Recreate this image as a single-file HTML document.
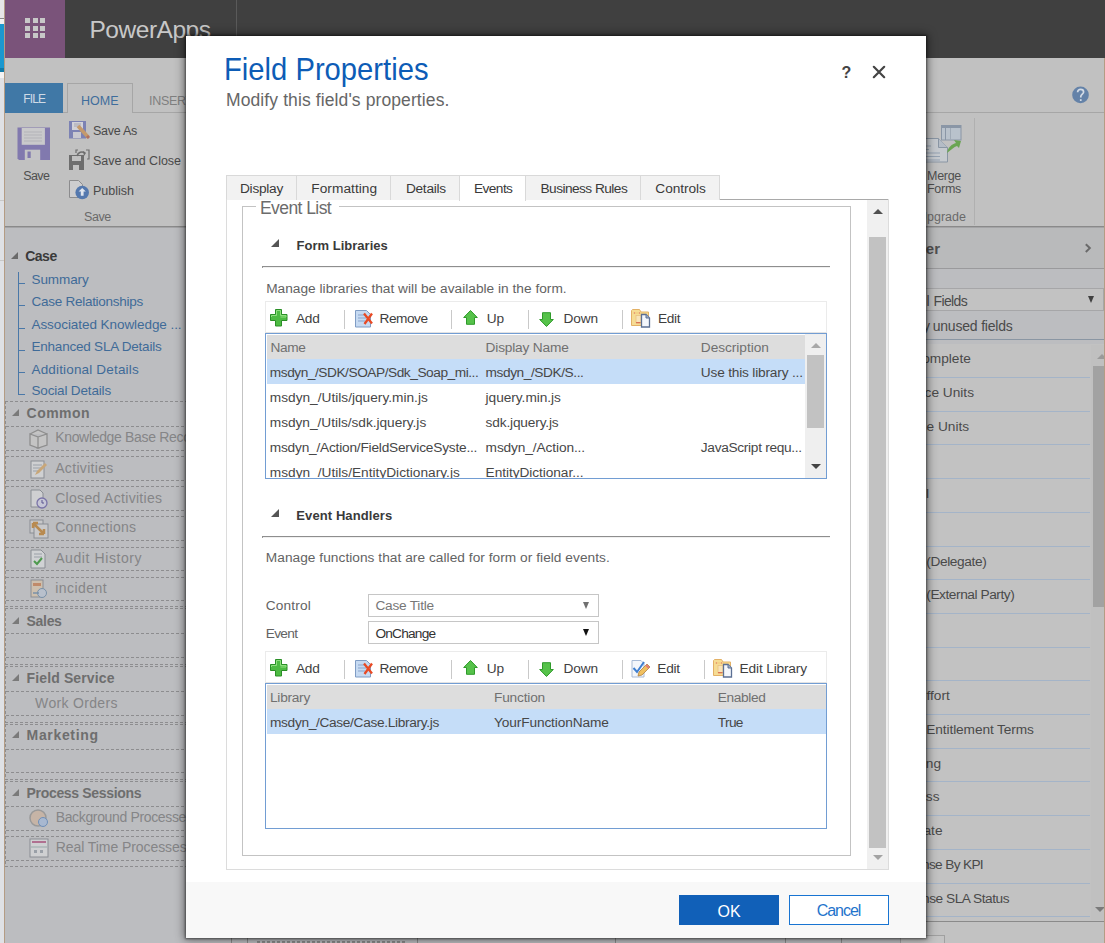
<!DOCTYPE html><html><head><meta charset="utf-8"><style>
html,body{margin:0;padding:0;width:1105px;height:943px;overflow:hidden;position:relative;font-family:"Liberation Sans",sans-serif}
.t{position:absolute;white-space:nowrap;font-family:"Liberation Sans",sans-serif}
</style></head><body>
<div style="position:absolute;left:0px;top:0px;width:1105px;height:943px;background:#bfbfbf"></div>
<div style="position:absolute;left:0px;top:0px;width:5px;height:943px;background:#dfe1e5"></div>
<div style="position:absolute;left:0px;top:0px;width:5px;height:18px;background:#e6e6e6"></div>
<div style="position:absolute;left:0px;top:18px;width:4px;height:1px;background:#8a8a8a"></div>
<div style="position:absolute;left:0px;top:19px;width:4px;height:5px;background:#f2f2f2"></div>
<div style="position:absolute;left:0px;top:24px;width:4px;height:44px;background:#1b98cf"></div>
<div style="position:absolute;left:0px;top:68px;width:4px;height:4px;background:#107aa8"></div>
<div style="position:absolute;left:0px;top:72px;width:4px;height:6px;background:#f4f4f4"></div>
<div style="position:absolute;left:0px;top:200px;width:4px;height:1px;background:#c8c8c8"></div>
<div style="position:absolute;left:0px;top:260px;width:4px;height:1px;background:#c8c8c8"></div>
<div style="position:absolute;left:4px;top:0px;width:1px;height:943px;background:#b49c84"></div>
<div style="position:absolute;left:5px;top:0px;width:1100px;height:58px;background:#404040"></div>
<div style="position:absolute;left:5px;top:0px;width:60px;height:58px;background:#7a537a"></div>
<div style="position:absolute;left:25px;top:18px;width:5px;height:5px;background:#c8c8c8"></div>
<div style="position:absolute;left:32.5px;top:18px;width:5px;height:5px;background:#c8c8c8"></div>
<div style="position:absolute;left:40px;top:18px;width:5px;height:5px;background:#c8c8c8"></div>
<div style="position:absolute;left:25px;top:25.5px;width:5px;height:5px;background:#c8c8c8"></div>
<div style="position:absolute;left:32.5px;top:25.5px;width:5px;height:5px;background:#c8c8c8"></div>
<div style="position:absolute;left:40px;top:25.5px;width:5px;height:5px;background:#c8c8c8"></div>
<div style="position:absolute;left:25px;top:33px;width:5px;height:5px;background:#c8c8c8"></div>
<div style="position:absolute;left:32.5px;top:33px;width:5px;height:5px;background:#c8c8c8"></div>
<div style="position:absolute;left:40px;top:33px;width:5px;height:5px;background:#c8c8c8"></div>
<div class="t" style="left:89.50px;top:13.60px;font-size:24.5px;line-height:31px;color:#c8c8c8;letter-spacing:-0.477px;">PowerApps</div>
<div style="position:absolute;left:236px;top:0px;width:1px;height:58px;background:#5a5a5a"></div>
<div style="position:absolute;left:5px;top:58px;width:1100px;height:169px;background:#c1c1c1"></div>
<div style="position:absolute;left:5px;top:112px;width:1100px;height:1px;background:#a6a6a6"></div>
<div style="position:absolute;left:5px;top:83px;width:58px;height:30px;background:#4078a6"></div>
<div class="t" style="left:23.20px;top:92.00px;font-size:12px;line-height:15px;color:#cfdbe6;letter-spacing:-0.836px;">FILE</div>
<div style="position:absolute;left:67px;top:83px;width:66px;height:30px;background:#c1c1c1;border:1px solid #a6a6a6;border-bottom:none;box-sizing:border-box"></div>
<div class="t" style="left:81.00px;top:92.80px;font-size:12.5px;line-height:16px;color:#3f6d9c;letter-spacing:0.000px;">HOME</div>
<div class="t" style="left:149.00px;top:92.80px;font-size:12.5px;line-height:16px;color:#7f7f7f;letter-spacing:-0.271px;">INSERT</div>
<svg style="position:absolute;left:17px;top:127px" width="34" height="34" viewBox="0 0 34 34">
<path d="M0.5 0.5h32.5v32.5H2l-1.5-1.5z" fill="#8179ae"/>
<rect x="4.7" y="1" width="23.2" height="16.8" fill="#c9c9cb"/>
<path d="M7 5h18M7 8h18M7 11h18M7 14h18" stroke="#aeaeb4" stroke-width="0.8"/>
<rect x="7.8" y="22.7" width="15.4" height="10.3" fill="#c4c4c6"/>
<rect x="10.5" y="24.5" width="3.2" height="6.5" fill="#8179ae"/>
</svg>
<div class="t" style="left:23.20px;top:167.70px;font-size:12.5px;line-height:16px;color:#4f4f4f;letter-spacing:-0.575px;">Save</div>
<svg style="position:absolute;left:69px;top:121px" width="21" height="19" viewBox="0 0 21 19">
<rect x="0" y="0" width="17" height="17.5" fill="#7c82b4"/><rect x="3" y="1" width="11" height="8" fill="#d2d2d8"/>
<path d="M5 3h7M5 5h7" stroke="#9a9aa8" stroke-width="0.8"/><rect x="4" y="11" width="8" height="6" fill="#c8c8d0"/>
<path d="M9 5l10.5 11.5" stroke="#c49a6c" stroke-width="3.6"/><path d="M18 15l2 2" stroke="#b07060" stroke-width="3"/></svg>
<div class="t" style="left:93.00px;top:123.00px;font-size:12.5px;line-height:16px;color:#4a4a4a;letter-spacing:-0.268px;">Save As</div>
<svg style="position:absolute;left:69px;top:149px" width="21" height="21" viewBox="0 0 21 21">
<path d="M0 6h15v15H0z" fill="#6e6e6e"/><rect x="3" y="7" width="9" height="5" fill="#c1c1c1"/><rect x="4" y="16" width="6" height="5" fill="#c1c1c1"/>
<path d="M7 4V1h2M17 1h3v9h-2" fill="none" stroke="#6e6e6e" stroke-width="1.2"/><path d="M8 7c1-4 5-5 8-3" fill="none" stroke="#6e6e6e" stroke-width="1.6"/><path d="M14 2l3 2-2 3" fill="#6e6e6e"/></svg>
<div class="t" style="left:93.00px;top:153.00px;font-size:12.5px;line-height:16px;color:#4a4a4a;letter-spacing:-0.019px;">Save and Close</div>
<svg style="position:absolute;left:69px;top:180px" width="21" height="21" viewBox="0 0 21 21">
<path d="M0.5 0.5h9l4 4v13H0.5z" fill="#cdcdcf" stroke="#8c8c8e" stroke-width="1"/>
<circle cx="13.2" cy="12.5" r="6.8" fill="#5478ae"/><path d="M13.2 8l-3.6 3.6h2.2v4.2h2.8v-4.2h2.2z" fill="#dfe5ee"/></svg>
<div class="t" style="left:93.00px;top:182.80px;font-size:12.5px;line-height:16px;color:#4a4a4a;letter-spacing:0.000px;">Publish</div>
<div class="t" style="left:84.00px;top:209.00px;font-size:12.5px;line-height:16px;color:#6a6a6a;letter-spacing:-0.450px;">Save</div>
<div style="position:absolute;left:5px;top:226px;width:1100px;height:1px;background:#9a9a9a"></div>
<div style="position:absolute;left:5px;top:227px;width:1100px;height:1px;background:#b0b0b0"></div>
<svg style="position:absolute;left:1072px;top:86px" width="17" height="18" viewBox="0 0 17 18">
<circle cx="8.5" cy="8.9" r="8.3" fill="#6482a8"/><path d="M5.6 6.3c0-2 1.3-3 3-3s3 1 3 2.6c0 2-2.8 2.3-2.8 4.6v1" fill="none" stroke="#d4dce6" stroke-width="1.7"/><rect x="7.9" y="13.2" width="1.7" height="1.8" fill="#d4dce6"/></svg>
<svg style="position:absolute;left:920px;top:124px" width="44" height="42" viewBox="0 0 44 42">
<rect x="21.5" y="1.5" width="19.5" height="14.5" fill="#b9c2cc" stroke="#8a96a6" stroke-width="1"/><rect x="21.5" y="1.5" width="19.5" height="2.5" fill="#8a96a6"/><path d="M25.5 4v12" stroke="#8a96a6"/><path d="M30.5 4v12" stroke="#a0aab6"/>
<path d="M0 14.5h18.5l9 9v14.5H0z" fill="#c6cacf" stroke="#8a96a4" stroke-width="1"/>
<path d="M18.5 14.5v9h9" fill="#b4bcc6" stroke="#8a96a4" stroke-width="1"/>
<path d="M4 22h7M4 25.5h5M4 29h16M4 32.5h16M4 36h16" stroke="#95a2b2" stroke-width="1"/>
<path d="M27 29c1-6 5-9 9-10l-2-3 7 1-2 7-2-2c-3 1-6 4-10 7z" fill="#6aa552"/></svg>
<div class="t" style="left:927.00px;top:168.00px;font-size:12.5px;line-height:16px;color:#4f4f4f;letter-spacing:-0.287px;">Merge</div>
<div class="t" style="left:927.00px;top:181.00px;font-size:12.5px;line-height:16px;color:#4f4f4f;letter-spacing:-0.284px;">Forms</div>
<div class="t" style="left:918.00px;top:209.00px;font-size:12.5px;line-height:16px;color:#6a6a6a;letter-spacing:0.007px;">Upgrade</div>
<div style="position:absolute;left:974px;top:118px;width:1px;height:107px;background:#b0b0b0"></div>
<div style="position:absolute;left:5px;top:228px;width:1099px;height:715px;background:#bcbdc0"></div>
<div style="position:absolute;left:5px;top:226px;width:1100px;height:1px;background:#8a8a8a"></div>
<div style="position:absolute;left:5px;top:227px;width:1100px;height:1px;background:#a4a4a6"></div>
<div style="position:absolute;left:4px;top:58px;width:1px;height:885px;background:#b49c84"></div>
<div style="position:absolute;left:1104px;top:58px;width:1px;height:885px;background:#b49c84"></div>
<div style="position:absolute;left:11px;top:252px;width:0;height:0;border-left:7px solid transparent;border-bottom:7px solid #6a6a6a"></div>
<div class="t" style="left:25.20px;top:247.00px;font-size:14px;line-height:18px;color:#3a3a3a;font-weight:bold;letter-spacing:-0.492px;">Case</div>
<div style="position:absolute;left:18px;top:272px;width:1px;height:123px;background:#4a78a8"></div>
<div style="position:absolute;left:0;top:0;width:186px;height:395px;overflow:hidden">
<div style="position:absolute;left:18px;top:282.5px;width:7px;height:1px;background:#4a78a8"></div>
<div class="t" style="left:31.50px;top:271.00px;font-size:13.5px;line-height:17px;color:#3f6b98;letter-spacing:-0.081px;">Summary</div>
<div style="position:absolute;left:18px;top:304.5px;width:7px;height:1px;background:#4a78a8"></div>
<div class="t" style="left:31.50px;top:293.00px;font-size:13.5px;line-height:17px;color:#3f6b98;letter-spacing:-0.267px;">Case Relationships</div>
<div style="position:absolute;left:18px;top:327.5px;width:7px;height:1px;background:#4a78a8"></div>
<div class="t" style="left:31.50px;top:316.00px;font-size:13.5px;line-height:17px;color:#3f6b98;letter-spacing:-0.066px;">Associated Knowledge ...</div>
<div style="position:absolute;left:18px;top:349.5px;width:7px;height:1px;background:#4a78a8"></div>
<div class="t" style="left:31.50px;top:338.00px;font-size:13.5px;line-height:17px;color:#3f6b98;letter-spacing:-0.217px;">Enhanced SLA Details</div>
<div style="position:absolute;left:18px;top:372.0px;width:7px;height:1px;background:#4a78a8"></div>
<div class="t" style="left:31.50px;top:360.50px;font-size:13.5px;line-height:17px;color:#3f6b98;letter-spacing:0.166px;">Additional Details</div>
<div style="position:absolute;left:18px;top:393.5px;width:7px;height:1px;background:#4a78a8"></div>
<div class="t" style="left:31.50px;top:382.00px;font-size:13.5px;line-height:17px;color:#3f6b98;letter-spacing:-0.164px;">Social Details</div>
</div>
<div style="position:absolute;left:5px;top:401px;width:181px;height:1px;background:repeating-linear-gradient(90deg,#8d8d8f 0 3px,transparent 3px 5px)"></div>
<div style="position:absolute;left:5px;top:605.5px;width:181px;height:1px;background:repeating-linear-gradient(90deg,#8d8d8f 0 3px,transparent 3px 5px)"></div>
<div style="position:absolute;left:5px;top:401px;width:1px;height:205.5px;background:repeating-linear-gradient(180deg,#8d8d8f 0 3px,transparent 3px 5px)"></div>
<div style="position:absolute;left:12px;top:408.5px;width:0;height:0;border-left:7px solid transparent;border-bottom:7px solid #7a7a7a"></div>
<div class="t" style="left:26.60px;top:403.50px;font-size:14px;line-height:18px;color:#6e6e6e;font-weight:bold;letter-spacing:0.471px;">Common</div>
<div style="position:absolute;left:0;top:0;width:186px;height:943px;overflow:hidden">
<div style="position:absolute;left:6px;top:426px;width:180px;height:1px;background:repeating-linear-gradient(90deg,#8d8d8f 0 3px,transparent 3px 5px)"></div>
<div style="position:absolute;left:6px;top:449.5px;width:180px;height:1px;background:repeating-linear-gradient(90deg,#8d8d8f 0 3px,transparent 3px 5px)"></div>
<svg style="position:absolute;left:29px;top:428.5px" width="20" height="20" viewBox="0 0 20 20"><path d="M1 5l8 3v11l-8-3zM9 8l9-3v11l-9 3zM1 5l8-4 9 4" fill="#c4c4c4" stroke="#8e8e8e" stroke-width="1.3"/></svg>
<div class="t" style="left:55.20px;top:428.20px;font-size:14px;line-height:18px;color:#858587;letter-spacing:-0.328px;">Knowledge Base Records</div>
<div style="position:absolute;left:6px;top:456px;width:180px;height:1px;background:repeating-linear-gradient(90deg,#8d8d8f 0 3px,transparent 3px 5px)"></div>
<div style="position:absolute;left:6px;top:479.5px;width:180px;height:1px;background:repeating-linear-gradient(90deg,#8d8d8f 0 3px,transparent 3px 5px)"></div>
<svg style="position:absolute;left:29px;top:458.5px" width="20" height="20" viewBox="0 0 20 20"><rect x="2" y="2" width="13" height="17" fill="#cfd0d2" stroke="#8a8e94"/><path d="M4 6h9M4 9h9M4 12h7" stroke="#9aa0a8"/><path d="M6 16l2-4 8-8 2 2-8 8z" fill="#c8a678"/></svg>
<div class="t" style="left:55.20px;top:458.80px;font-size:14px;line-height:18px;color:#858587;letter-spacing:0.327px;">Activities</div>
<div style="position:absolute;left:6px;top:486px;width:180px;height:1px;background:repeating-linear-gradient(90deg,#8d8d8f 0 3px,transparent 3px 5px)"></div>
<div style="position:absolute;left:6px;top:509.5px;width:180px;height:1px;background:repeating-linear-gradient(90deg,#8d8d8f 0 3px,transparent 3px 5px)"></div>
<svg style="position:absolute;left:29px;top:488.5px" width="20" height="20" viewBox="0 0 20 20"><path d="M2 1h9l3 3v14H2z" fill="#cfd0d2" stroke="#8a8e94"/><circle cx="13" cy="14" r="5" fill="#c6c6d6" stroke="#7a74a8" stroke-width="1.3"/><path d="M13 11v3h2" stroke="#5a5490" fill="none"/></svg>
<div class="t" style="left:55.20px;top:488.60px;font-size:14px;line-height:18px;color:#858587;letter-spacing:0.310px;">Closed Activities</div>
<div style="position:absolute;left:6px;top:516px;width:180px;height:1px;background:repeating-linear-gradient(90deg,#8d8d8f 0 3px,transparent 3px 5px)"></div>
<div style="position:absolute;left:6px;top:539.5px;width:180px;height:1px;background:repeating-linear-gradient(90deg,#8d8d8f 0 3px,transparent 3px 5px)"></div>
<svg style="position:absolute;left:29px;top:518.5px" width="20" height="20" viewBox="0 0 20 20"><rect x="1" y="1" width="13" height="13" fill="#c8c8ca" stroke="#8a8e94"/><rect x="5" y="5" width="14" height="14" fill="#c8c8ca" stroke="#8a8e94"/><path d="M4 4l11 11M4 4h5M4 4v5M15 15h-5M15 15v-5" stroke="#b88a50" stroke-width="2.5"/></svg>
<div class="t" style="left:55.20px;top:518.40px;font-size:14px;line-height:18px;color:#858587;letter-spacing:0.307px;">Connections</div>
<div style="position:absolute;left:6px;top:546.5px;width:180px;height:1px;background:repeating-linear-gradient(90deg,#8d8d8f 0 3px,transparent 3px 5px)"></div>
<div style="position:absolute;left:6px;top:570px;width:180px;height:1px;background:repeating-linear-gradient(90deg,#8d8d8f 0 3px,transparent 3px 5px)"></div>
<svg style="position:absolute;left:29px;top:549.0px" width="20" height="20" viewBox="0 0 20 20"><path d="M2 1h10l4 4v14H2z" fill="#d0d2d4" stroke="#8a8e94"/><path d="M5 5h8M5 8h8" stroke="#9aa0a8"/><path d="M5 12l3 3 5-6" stroke="#4e9a4e" stroke-width="2" fill="none"/></svg>
<div class="t" style="left:55.20px;top:548.60px;font-size:14px;line-height:18px;color:#858587;letter-spacing:0.588px;">Audit History</div>
<div style="position:absolute;left:6px;top:576.5px;width:180px;height:1px;background:repeating-linear-gradient(90deg,#8d8d8f 0 3px,transparent 3px 5px)"></div>
<div style="position:absolute;left:6px;top:600px;width:180px;height:1px;background:repeating-linear-gradient(90deg,#8d8d8f 0 3px,transparent 3px 5px)"></div>
<svg style="position:absolute;left:29px;top:579.0px" width="20" height="20" viewBox="0 0 20 20"><rect x="2" y="1" width="12" height="17" fill="#cdbfae" stroke="#8a8e94"/><rect x="4" y="4" width="8" height="3" fill="#c08a6a"/><circle cx="13" cy="14" r="4.5" fill="#b8c0cc" stroke="#7890a8"/><path d="M4 14h6" stroke="#7890a8" stroke-width="1.5"/></svg>
<div class="t" style="left:55.20px;top:578.60px;font-size:14px;line-height:18px;color:#858587;letter-spacing:0.467px;">incident</div>
<div style="position:absolute;left:5px;top:607.5px;width:181px;height:1px;background:repeating-linear-gradient(90deg,#8d8d8f 0 3px,transparent 3px 5px)"></div>
<div style="position:absolute;left:5px;top:664px;width:181px;height:1px;background:repeating-linear-gradient(90deg,#8d8d8f 0 3px,transparent 3px 5px)"></div>
<div style="position:absolute;left:5px;top:607.5px;width:1px;height:57.5px;background:repeating-linear-gradient(180deg,#8d8d8f 0 3px,transparent 3px 5px)"></div>
<div style="position:absolute;left:12px;top:617px;width:0;height:0;border-left:7px solid transparent;border-bottom:7px solid #7a7a7a"></div>
<div class="t" style="left:26.60px;top:612.00px;font-size:14px;line-height:18px;color:#6e6e6e;font-weight:bold;letter-spacing:-0.319px;">Sales</div>
<div style="position:absolute;left:6px;top:633px;width:180px;height:1px;background:repeating-linear-gradient(90deg,#8d8d8f 0 3px,transparent 3px 5px)"></div>
<div style="position:absolute;left:6px;top:656.5px;width:180px;height:1px;background:repeating-linear-gradient(90deg,#8d8d8f 0 3px,transparent 3px 5px)"></div>
<div style="position:absolute;left:5px;top:666px;width:181px;height:1px;background:repeating-linear-gradient(90deg,#8d8d8f 0 3px,transparent 3px 5px)"></div>
<div style="position:absolute;left:5px;top:721.5px;width:181px;height:1px;background:repeating-linear-gradient(90deg,#8d8d8f 0 3px,transparent 3px 5px)"></div>
<div style="position:absolute;left:5px;top:666px;width:1px;height:56.5px;background:repeating-linear-gradient(180deg,#8d8d8f 0 3px,transparent 3px 5px)"></div>
<div style="position:absolute;left:12px;top:673.5px;width:0;height:0;border-left:7px solid transparent;border-bottom:7px solid #7a7a7a"></div>
<div class="t" style="left:26.60px;top:668.50px;font-size:14px;line-height:18px;color:#6e6e6e;font-weight:bold;letter-spacing:0.124px;">Field Service</div>
<div style="position:absolute;left:6px;top:691px;width:180px;height:1px;background:repeating-linear-gradient(90deg,#8d8d8f 0 3px,transparent 3px 5px)"></div>
<div style="position:absolute;left:6px;top:714.5px;width:180px;height:1px;background:repeating-linear-gradient(90deg,#8d8d8f 0 3px,transparent 3px 5px)"></div>
<div class="t" style="left:35.10px;top:694.00px;font-size:14px;line-height:18px;color:#858587;letter-spacing:0.328px;">Work Orders</div>
<div style="position:absolute;left:5px;top:723.5px;width:181px;height:1px;background:repeating-linear-gradient(90deg,#8d8d8f 0 3px,transparent 3px 5px)"></div>
<div style="position:absolute;left:5px;top:778.5px;width:181px;height:1px;background:repeating-linear-gradient(90deg,#8d8d8f 0 3px,transparent 3px 5px)"></div>
<div style="position:absolute;left:5px;top:723.5px;width:1px;height:56.0px;background:repeating-linear-gradient(180deg,#8d8d8f 0 3px,transparent 3px 5px)"></div>
<div style="position:absolute;left:12px;top:731px;width:0;height:0;border-left:7px solid transparent;border-bottom:7px solid #7a7a7a"></div>
<div class="t" style="left:26.60px;top:726.00px;font-size:14px;line-height:18px;color:#6e6e6e;font-weight:bold;letter-spacing:0.653px;">Marketing</div>
<div style="position:absolute;left:6px;top:748.5px;width:180px;height:1px;background:repeating-linear-gradient(90deg,#8d8d8f 0 3px,transparent 3px 5px)"></div>
<div style="position:absolute;left:6px;top:772px;width:180px;height:1px;background:repeating-linear-gradient(90deg,#8d8d8f 0 3px,transparent 3px 5px)"></div>
<div style="position:absolute;left:5px;top:780.5px;width:181px;height:1px;background:repeating-linear-gradient(90deg,#8d8d8f 0 3px,transparent 3px 5px)"></div>
<div style="position:absolute;left:5px;top:866px;width:181px;height:1px;background:repeating-linear-gradient(90deg,#8d8d8f 0 3px,transparent 3px 5px)"></div>
<div style="position:absolute;left:5px;top:780.5px;width:1px;height:86.5px;background:repeating-linear-gradient(180deg,#8d8d8f 0 3px,transparent 3px 5px)"></div>
<div style="position:absolute;left:12px;top:788.6px;width:0;height:0;border-left:7px solid transparent;border-bottom:7px solid #7a7a7a"></div>
<div class="t" style="left:26.60px;top:783.60px;font-size:14px;line-height:18px;color:#6e6e6e;font-weight:bold;letter-spacing:-0.329px;">Process Sessions</div>
<div style="position:absolute;left:6px;top:806px;width:180px;height:1px;background:repeating-linear-gradient(90deg,#8d8d8f 0 3px,transparent 3px 5px)"></div>
<div style="position:absolute;left:6px;top:829.5px;width:180px;height:1px;background:repeating-linear-gradient(90deg,#8d8d8f 0 3px,transparent 3px 5px)"></div>
<svg style="position:absolute;left:29px;top:808px" width="20" height="20" viewBox="0 0 20 20"><circle cx="9" cy="10" r="8" fill="#c6b4a6" stroke="#999" stroke-width="1.5"/><circle cx="14" cy="14" r="4.5" fill="#a8b8d0" stroke="#6f8fb8"/></svg>
<div class="t" style="left:55.70px;top:808.30px;font-size:14px;line-height:18px;color:#858587;letter-spacing:-0.348px;">Background Processes</div>
<div style="position:absolute;left:6px;top:836px;width:180px;height:1px;background:repeating-linear-gradient(90deg,#8d8d8f 0 3px,transparent 3px 5px)"></div>
<div style="position:absolute;left:6px;top:859.5px;width:180px;height:1px;background:repeating-linear-gradient(90deg,#8d8d8f 0 3px,transparent 3px 5px)"></div>
<svg style="position:absolute;left:29px;top:838px" width="20" height="20" viewBox="0 0 20 20"><rect x="1" y="1" width="18" height="18" fill="#cfd0d2" stroke="#8a8e94"/><path d="M3 4h14" stroke="#b07090" stroke-width="2"/><path d="M2 9h16" stroke="#9aa"/><rect x="5" y="12" width="3" height="3" fill="#9aa0a8"/><rect x="11" y="12" width="3" height="3" fill="#9aa0a8"/></svg>
<div class="t" style="left:55.70px;top:838.30px;font-size:14px;line-height:18px;color:#858587;letter-spacing:-0.067px;">Real Time Processes</div>
</div>
<div style="position:absolute;left:900px;top:228px;width:204px;height:40px;background:#b9babb"></div>
<div class="t" style="left:839.97px;top:239.00px;font-size:15px;line-height:19px;color:#505050;font-weight:bold;">Field Explorer</div>
<svg style="position:absolute;left:1083px;top:242px" width="10" height="12"><path d="M2.8 2.2l4 3.9-4 3.9" fill="none" stroke="#6a6a6a" stroke-width="2"/></svg>
<div style="position:absolute;left:926px;top:268px;width:178px;height:1px;background:#9a9a9c"></div>
<div style="position:absolute;left:900px;top:288px;width:204px;height:22.5px;background:#c2c2c2;border:1px solid #a6a6a8;box-sizing:border-box"></div>
<div class="t" style="left:926.50px;top:292.20px;font-size:14px;line-height:18px;color:#4a4a4a;">l</div>
<div class="t" style="left:933.50px;top:292.20px;font-size:14px;line-height:18px;color:#4a4a4a;letter-spacing:-0.643px;">Fields</div>
<div style="position:absolute;left:1088px;top:296px;width:0;height:0;border-left:3.6px solid transparent;border-right:3.6px solid transparent;border-top:7px solid #404040"></div>
<div class="t" style="left:923.00px;top:316.70px;font-size:14px;line-height:18px;color:#4a4a4a;">y</div>
<div class="t" style="left:932.70px;top:316.70px;font-size:14px;line-height:18px;color:#4a4a4a;letter-spacing:-0.194px;">unused fields</div>
<div style="position:absolute;left:900px;top:339px;width:204px;height:1px;background:#8a96a3"></div>
<div style="position:absolute;left:900px;top:343.5px;width:204px;height:580px;background:#c2c2c2"></div>
<div style="position:absolute;left:926px;top:377.0px;width:164px;height:1px;background:#a4b4c8"></div>
<div style="position:absolute;left:926px;top:410.7px;width:164px;height:1px;background:#a4b4c8"></div>
<div style="position:absolute;left:926px;top:444.4px;width:164px;height:1px;background:#a4b4c8"></div>
<div style="position:absolute;left:926px;top:478.1px;width:164px;height:1px;background:#a4b4c8"></div>
<div style="position:absolute;left:926px;top:511.8px;width:164px;height:1px;background:#a4b4c8"></div>
<div style="position:absolute;left:926px;top:545.5px;width:164px;height:1px;background:#a4b4c8"></div>
<div style="position:absolute;left:926px;top:579.2px;width:164px;height:1px;background:#a4b4c8"></div>
<div style="position:absolute;left:926px;top:612.9000000000001px;width:164px;height:1px;background:#a4b4c8"></div>
<div style="position:absolute;left:926px;top:646.6px;width:164px;height:1px;background:#a4b4c8"></div>
<div style="position:absolute;left:926px;top:680.3px;width:164px;height:1px;background:#a4b4c8"></div>
<div style="position:absolute;left:926px;top:714.0px;width:164px;height:1px;background:#a4b4c8"></div>
<div style="position:absolute;left:926px;top:747.7px;width:164px;height:1px;background:#a4b4c8"></div>
<div style="position:absolute;left:926px;top:781.4000000000001px;width:164px;height:1px;background:#a4b4c8"></div>
<div style="position:absolute;left:926px;top:815.1px;width:164px;height:1px;background:#a4b4c8"></div>
<div style="position:absolute;left:926px;top:848.8000000000001px;width:164px;height:1px;background:#a4b4c8"></div>
<div style="position:absolute;left:926px;top:882.5px;width:164px;height:1px;background:#a4b4c8"></div>
<div style="position:absolute;left:926px;top:916.2px;width:164px;height:1px;background:#a4b4c8"></div>
<div style="position:absolute;left:1091px;top:345px;width:13px;height:575px;background:#c0c0c0"></div>
<div style="position:absolute;left:1093px;top:366px;width:11px;height:241px;background:#a2a2a2"></div>
<div style="position:absolute;left:1097px;top:353.8px;width:0;height:0;border-left:5px solid transparent;border-right:5px solid transparent;border-bottom:5px solid #9a9a9a"></div>
<div style="position:absolute;left:1095px;top:907px;width:0;height:0;border-left:5px solid transparent;border-right:5px solid transparent;border-top:5px solid #7a7a7a"></div>
<div style="position:absolute;left:1104px;top:58px;width:1px;height:885px;background:#b49c84"></div>
<div style="position:absolute;left:900px;top:921px;width:204px;height:1px;background:#8a8a8a"></div>
<div style="position:absolute;left:900px;top:922px;width:204px;height:21px;background:#c2c2c2"></div>
<div style="position:absolute;left:900px;top:935px;width:45px;height:10px;border:1px solid #a0a0a0;box-sizing:border-box;background:#c4c4c4"></div>
<div style="position:absolute;left:231px;top:936px;width:1px;height:7px;background:#8a8a8a"></div>
<div style="position:absolute;left:246.5px;top:936px;width:1px;height:7px;background:#8a8a8a"></div>
<div style="position:absolute;left:416.5px;top:936px;width:1px;height:7px;background:#8a8a8a"></div>
<div style="position:absolute;left:615px;top:936px;width:1px;height:7px;background:#8a8a8a"></div>
<div style="position:absolute;left:785px;top:936px;width:1px;height:7px;background:#8a8a8a"></div>
<div style="position:absolute;left:840.5px;top:936px;width:1px;height:7px;background:#8a8a8a"></div>
<div style="position:absolute;left:257px;top:941px;width:148px;height:2px;background:repeating-linear-gradient(90deg,#8a8a8a 0 3px,transparent 3px 5px)"></div>
<div class="t" style="left:922.20px;top:350.30px;font-size:13.7px;line-height:17px;color:#4a4a4a;">omplete</div>
<div class="t" style="left:924.55px;top:384.00px;font-size:13.7px;line-height:17px;color:#4a4a4a;">ce Units</div>
<div class="t" style="left:926.49px;top:417.70px;font-size:13.7px;line-height:17px;color:#4a4a4a;">e Units</div>
<div class="t" style="left:925.95px;top:485.10px;font-size:13.7px;line-height:17px;color:#4a4a4a;">l</div>
<div class="t" style="left:926.46px;top:687.30px;font-size:13.7px;line-height:17px;color:#4a4a4a;">ffort</div>
<div class="t" style="left:925.77px;top:754.70px;font-size:13.7px;line-height:17px;color:#4a4a4a;">ng</div>
<div class="t" style="left:925.81px;top:788.40px;font-size:13.7px;line-height:17px;color:#4a4a4a;">ss</div>
<div class="t" style="left:923.47px;top:822.10px;font-size:13.7px;line-height:17px;color:#4a4a4a;">ate</div>
<div class="t" style="left:926.30px;top:552.50px;font-size:13.7px;line-height:17px;color:#4a4a4a;letter-spacing:-0.391px;">(Delegate)</div>
<div class="t" style="left:926.30px;top:586.20px;font-size:13.7px;line-height:17px;color:#4a4a4a;letter-spacing:-0.442px;">(External Party)</div>
<div class="t" style="left:926.30px;top:721.00px;font-size:13.7px;line-height:17px;color:#4a4a4a;letter-spacing:-0.106px;">Entitlement Terms</div>
<div class="t" style="left:922.00px;top:855.80px;font-size:13.7px;line-height:17px;color:#4a4a4a;letter-spacing:-0.672px;">nse By KPI</div>
<div class="t" style="left:922.00px;top:889.50px;font-size:13.7px;line-height:17px;color:#4a4a4a;letter-spacing:-0.471px;">nse SLA Status</div>
<div style="position:absolute;left:186px;top:36px;width:740px;height:901.5px;background:#fff;box-shadow:0 0 2px 1px rgba(0,0,0,.45),0 0 9px 2px rgba(0,0,0,.45)"></div>
<div style="position:absolute;left:186px;top:882px;width:740px;height:55.5px;background:#f8f8f8"></div>
<div class="t" style="left:224.00px;top:49.90px;font-size:30.5px;line-height:38px;color:#0d5cb6;transform:scaleX(0.9574);transform-origin:0 0;">Field Properties</div>
<div class="t" style="left:226.00px;top:88.60px;font-size:17.5px;line-height:22px;color:#666666;letter-spacing:0.105px;">Modify this field&#x27;s properties.</div>
<div class="t" style="left:841.50px;top:63.00px;font-size:16px;line-height:20px;color:#444;font-weight:bold;letter-spacing:-0.781px;">?</div>
<svg style="position:absolute;left:872px;top:65px" width="14" height="14" viewBox="0 0 14 14"><path d="M1.8 1.8l10.4 10.4M12.2 1.8L1.8 12.2" stroke="#444" stroke-width="2.2" stroke-linecap="round"/></svg>
<div style="position:absolute;left:226px;top:175px;width:71px;height:24.5px;background:#f2f2f2;border:1px solid #d9d9d9;border-bottom:none;box-sizing:border-box"></div>
<div class="t" style="left:240.00px;top:180.00px;font-size:13.7px;line-height:17px;color:#3a3a3a;letter-spacing:-0.270px;">Display</div>
<div style="position:absolute;left:296px;top:175px;width:95px;height:24.5px;background:#f2f2f2;border:1px solid #d9d9d9;border-bottom:none;box-sizing:border-box"></div>
<div class="t" style="left:311.30px;top:180.00px;font-size:13.7px;line-height:17px;color:#3a3a3a;letter-spacing:0.048px;">Formatting</div>
<div style="position:absolute;left:390px;top:175px;width:70px;height:24.5px;background:#f2f2f2;border:1px solid #d9d9d9;border-bottom:none;box-sizing:border-box"></div>
<div class="t" style="left:405.90px;top:180.00px;font-size:13.7px;line-height:17px;color:#3a3a3a;letter-spacing:-0.263px;">Details</div>
<div style="position:absolute;left:459px;top:175px;width:67px;height:25.5px;background:#ffffff;border:1px solid #d9d9d9;border-bottom:none;box-sizing:border-box"></div>
<div class="t" style="left:474.00px;top:180.00px;font-size:13.7px;line-height:17px;color:#3a3a3a;letter-spacing:-0.577px;">Events</div>
<div style="position:absolute;left:525px;top:175px;width:116px;height:24.5px;background:#f2f2f2;border:1px solid #d9d9d9;border-bottom:none;box-sizing:border-box"></div>
<div class="t" style="left:540.50px;top:180.00px;font-size:13.7px;line-height:17px;color:#3a3a3a;letter-spacing:-0.546px;">Business Rules</div>
<div style="position:absolute;left:640px;top:175px;width:80px;height:24.5px;background:#f2f2f2;border:1px solid #d9d9d9;border-bottom:none;box-sizing:border-box"></div>
<div class="t" style="left:655.30px;top:180.00px;font-size:13.7px;line-height:17px;color:#3a3a3a;letter-spacing:-0.046px;">Controls</div>
<div style="position:absolute;left:720px;top:199px;width:169px;height:1px;background:#a9a9a9"></div>
<div style="position:absolute;left:226px;top:199px;width:1px;height:670px;background:#dcdcdc"></div>
<div style="position:absolute;left:226px;top:869px;width:663px;height:1px;background:#dcdcdc"></div>
<div style="position:absolute;left:888px;top:199px;width:1px;height:671px;background:#dcdcdc"></div>
<div style="position:absolute;left:867px;top:200px;width:21px;height:669px;background:#f0f0f0"></div>
<div style="position:absolute;left:869px;top:237px;width:17px;height:611px;background:#c2c2c2"></div>
<div style="position:absolute;left:872.5px;top:209px;width:0;height:0;border-left:5px solid transparent;border-right:5px solid transparent;border-bottom:5px solid #505050"></div>
<div style="position:absolute;left:872.5px;top:855px;width:0;height:0;border-left:5px solid transparent;border-right:5px solid transparent;border-top:5px solid #a3a3a3"></div>
<div style="position:absolute;left:242px;top:206px;width:609px;height:650px;border:1px solid #c3c3c3;box-sizing:border-box"></div>
<div style="position:absolute;left:256px;top:204px;width:83px;height:5px;background:#fff"></div>
<div class="t" style="left:259.90px;top:197.10px;font-size:17.5px;line-height:22px;color:#6c6c6c;letter-spacing:-0.556px;">Event List</div>
<div style="position:absolute;left:270.5px;top:239px;width:0;height:0;border-left:8px solid transparent;border-bottom:8px solid #555"></div>
<div class="t" style="left:296.50px;top:237.70px;font-size:13px;line-height:16px;color:#3a3a3a;font-weight:bold;letter-spacing:0.019px;">Form Libraries</div>
<div style="position:absolute;left:262px;top:266px;width:568px;height:1px;background:#8e8e8e"></div>
<div style="position:absolute;left:262px;top:267px;width:1px;height:1px;background:#9a9a9a"></div>
<div style="position:absolute;left:263px;top:267px;width:567px;height:1px;background:#f0f0f0"></div>
<div class="t" style="left:266.20px;top:280.00px;font-size:13.7px;line-height:17px;color:#636363;letter-spacing:0.014px;">Manage libraries that will be available in the form.</div>
<div style="position:absolute;left:265px;top:300.5px;width:562px;height:32px;border:1px solid #ebebeb;border-bottom:1px solid #e3e3e3;box-sizing:border-box"></div>
<svg style="position:absolute;left:269.5px;top:309.0px" width="18" height="18" viewBox="0 0 18 18">
<path d="M5.5 0.5h6v5h5.5v6h-5.5v5.5h-6v-5.5H0.5v-6h5z" fill="#4dbb43" stroke="#2a8f27" stroke-width="1"/>
<path d="M6.5 1.5h4v5h5.5v1.5h-5.5M6.5 1.5v5H1.5v1.5" fill="none" stroke="#8fe07f" stroke-width="1"/></svg>
<div class="t" style="left:295.90px;top:310.00px;font-size:13.7px;line-height:17px;color:#3f3f3f;letter-spacing:-0.186px;">Add</div>
<div style="position:absolute;left:343.5px;top:309.5px;width:1px;height:19px;background:#c9c9c9"></div>
<svg style="position:absolute;left:354.5px;top:309.5px" width="19" height="18" viewBox="0 0 19 18">
<path d="M0.5 0.5h11l4 4v12.5H0.5z" fill="#c6daf2" stroke="#7f9cc4" stroke-width="1"/>
<path d="M3 5h8M3 8h8M3 11h7" stroke="#8aa5cc" stroke-width="1"/>
<path d="M9 3.5l8 10M17 3.5l-7.5 10.5" stroke="#e84a25" stroke-width="2.3"/></svg>
<div class="t" style="left:379.50px;top:310.00px;font-size:13.7px;line-height:17px;color:#3f3f3f;letter-spacing:-0.495px;">Remove</div>
<div style="position:absolute;left:450.5px;top:309.5px;width:1px;height:19px;background:#c9c9c9"></div>
<svg style="position:absolute;left:463px;top:310.0px" width="15" height="15" viewBox="0 0 15 15">
<path d="M7.5 0.5L14.3 7.5H11.5v6.8H3.5V7.5H0.7z" fill="#56c24a" stroke="#2f9a2a" stroke-width="1"/></svg>
<div class="t" style="left:486.70px;top:310.00px;font-size:13.7px;line-height:17px;color:#3f3f3f;letter-spacing:0.000px;">Up</div>
<div style="position:absolute;left:527.5px;top:309.5px;width:1px;height:19px;background:#c9c9c9"></div>
<svg style="position:absolute;left:539px;top:311.5px" width="15" height="15" viewBox="0 0 15 15">
<path d="M7.5 14.5L14.3 7.5H11.5V0.7H3.5v6.8H0.7z" fill="#56c24a" stroke="#2f9a2a" stroke-width="1"/></svg>
<div class="t" style="left:563.60px;top:310.00px;font-size:13.7px;line-height:17px;color:#3f3f3f;letter-spacing:-0.200px;">Down</div>
<div style="position:absolute;left:621.5px;top:309.5px;width:1px;height:19px;background:#c9c9c9"></div>
<svg style="position:absolute;left:630.5px;top:308.5px" width="20" height="19" viewBox="0 0 20 19">
<path d="M0.5 1.5l1-1h7l1.5 2.5H17.5v13.5H0.5z" fill="#f6dc94" stroke="#e3b166" stroke-width="1"/>
<path d="M2 4h14" stroke="#f0c878" stroke-width="1"/><path d="M3 4h1M8 4h1" stroke="#e06a6a" stroke-width="1.2"/>
<rect x="5" y="6.5" width="5" height="7" fill="#f8e4b8" stroke="#e8c080" stroke-width="0.8"/>
<path d="M5 13.7h4.5" stroke="#d86a50" stroke-width="1.2"/>
<path d="M10.5 5.5h4.5l3.5 3.5v9h-8z" fill="#f4f7fc" stroke="#5c7094" stroke-width="1.3"/>
<path d="M15 5.5v3.5h3.5" fill="#9eb0cc" stroke="#5c7094" stroke-width="1"/></svg>
<div class="t" style="left:658.00px;top:310.00px;font-size:13.7px;line-height:17px;color:#3f3f3f;letter-spacing:-0.373px;">Edit</div>
<div style="position:absolute;left:265px;top:333px;width:562px;height:146px;border:1px solid #729dd3;box-sizing:border-box;overflow:hidden"></div>
<div style="position:absolute;left:267px;top:334.5px;width:538px;height:24.5px;background:#dddddd"></div>
<div style="position:absolute;left:267px;top:359px;width:538px;height:24.5px;background:#c5ddf8"></div>
<div style="position:absolute;left:805px;top:334px;width:21px;height:144px;background:#efefef"></div>
<div style="position:absolute;left:807px;top:355px;width:16.5px;height:72.5px;background:#c2c2c2"></div>
<div style="position:absolute;left:811px;top:342.5px;width:0;height:0;border-left:5px solid transparent;border-right:5px solid transparent;border-bottom:5px solid #a8a8a8"></div>
<div style="position:absolute;left:811px;top:463.5px;width:0;height:0;border-left:5px solid transparent;border-right:5px solid transparent;border-top:5px solid #444"></div>
<div class="t" style="left:270.40px;top:338.80px;font-size:13.7px;line-height:17px;color:#707070;letter-spacing:-0.379px;">Name</div>
<div class="t" style="left:485.60px;top:338.80px;font-size:13.7px;line-height:17px;color:#707070;letter-spacing:-0.184px;">Display Name</div>
<div class="t" style="left:700.80px;top:338.80px;font-size:13.7px;line-height:17px;color:#707070;letter-spacing:-0.043px;">Description</div>
<div style="position:absolute;left:266px;top:334px;width:539px;height:144px;overflow:hidden">
<div class="t" style="left:3.80px;top:29.70px;font-size:13.7px;line-height:17px;color:#474747;letter-spacing:-0.455px;">msdyn_/SDK/SOAP/Sdk_Soap_mi...</div>
<div class="t" style="left:219.60px;top:29.70px;font-size:13.7px;line-height:17px;color:#474747;letter-spacing:-0.428px;">msdyn_/SDK/S...</div>
<div class="t" style="left:434.80px;top:29.70px;font-size:13.7px;line-height:17px;color:#474747;letter-spacing:-0.187px;">Use this library ...</div>
<div class="t" style="left:3.80px;top:54.70px;font-size:13.7px;line-height:17px;color:#474747;letter-spacing:0.001px;">msdyn_/Utils/jquery.min.js</div>
<div class="t" style="left:219.60px;top:54.70px;font-size:13.7px;line-height:17px;color:#474747;letter-spacing:-0.039px;">jquery.min.js</div>
<div class="t" style="left:3.80px;top:79.70px;font-size:13.7px;line-height:17px;color:#474747;letter-spacing:-0.031px;">msdyn_/Utils/sdk.jquery.js</div>
<div class="t" style="left:219.60px;top:79.70px;font-size:13.7px;line-height:17px;color:#474747;letter-spacing:-0.166px;">sdk.jquery.js</div>
<div class="t" style="left:3.80px;top:104.70px;font-size:13.7px;line-height:17px;color:#474747;letter-spacing:-0.210px;">msdyn_/Action/FieldServiceSyste...</div>
<div class="t" style="left:219.60px;top:104.70px;font-size:13.7px;line-height:17px;color:#474747;letter-spacing:-0.112px;">msdyn_/Action...</div>
<div class="t" style="left:434.80px;top:104.70px;font-size:13.7px;line-height:17px;color:#474747;letter-spacing:-0.306px;">JavaScript requ...</div>
<div class="t" style="left:3.80px;top:129.70px;font-size:13.7px;line-height:17px;color:#474747;letter-spacing:0.003px;">msdyn_/Utils/EntityDictionary.js</div>
<div class="t" style="left:219.60px;top:129.70px;font-size:13.7px;line-height:17px;color:#474747;letter-spacing:-0.061px;">EntityDictionar...</div>
</div>
<div style="position:absolute;left:270.5px;top:509px;width:0;height:0;border-left:8px solid transparent;border-bottom:8px solid #555"></div>
<div class="t" style="left:296.30px;top:508.00px;font-size:13px;line-height:16px;color:#3a3a3a;font-weight:bold;letter-spacing:0.096px;">Event Handlers</div>
<div style="position:absolute;left:262px;top:536px;width:568px;height:1px;background:#8e8e8e"></div>
<div style="position:absolute;left:262px;top:537px;width:1px;height:1px;background:#9a9a9a"></div>
<div style="position:absolute;left:263px;top:537px;width:567px;height:1px;background:#f0f0f0"></div>
<div class="t" style="left:265.80px;top:549.40px;font-size:13.7px;line-height:17px;color:#636363;letter-spacing:0.041px;">Manage functions that are called for form or field events.</div>
<div class="t" style="left:265.80px;top:597.40px;font-size:13.7px;line-height:17px;color:#636363;letter-spacing:0.125px;">Control</div>
<div class="t" style="left:265.80px;top:624.50px;font-size:13.7px;line-height:17px;color:#636363;letter-spacing:-0.703px;">Event</div>
<div style="position:absolute;left:368px;top:594px;width:231px;height:22.5px;border:1px solid #c6c6c6;box-sizing:border-box;background:#fff"></div>
<div class="t" style="left:375.40px;top:597.40px;font-size:13.7px;line-height:17px;color:#777777;letter-spacing:-0.236px;">Case Title</div>
<div style="position:absolute;left:582.8px;top:601.5px;width:0;height:0;border-left:3.6px solid transparent;border-right:3.6px solid transparent;border-top:7px solid #707070"></div>
<div style="position:absolute;left:368px;top:621px;width:231px;height:22.5px;border:1px solid #c6c6c6;box-sizing:border-box;background:#fff"></div>
<div class="t" style="left:375.40px;top:624.50px;font-size:13.7px;line-height:17px;color:#333333;letter-spacing:-0.777px;">OnChange</div>
<div style="position:absolute;left:582.8px;top:628.5px;width:0;height:0;border-left:3.6px solid transparent;border-right:3.6px solid transparent;border-top:7px solid #111"></div>
<div style="position:absolute;left:265px;top:650.5px;width:562px;height:32px;border:1px solid #ebebeb;border-bottom:1px solid #e3e3e3;box-sizing:border-box"></div>
<svg style="position:absolute;left:269.5px;top:659.0px" width="18" height="18" viewBox="0 0 18 18">
<path d="M5.5 0.5h6v5h5.5v6h-5.5v5.5h-6v-5.5H0.5v-6h5z" fill="#4dbb43" stroke="#2a8f27" stroke-width="1"/>
<path d="M6.5 1.5h4v5h5.5v1.5h-5.5M6.5 1.5v5H1.5v1.5" fill="none" stroke="#8fe07f" stroke-width="1"/></svg>
<div class="t" style="left:295.90px;top:660.00px;font-size:13.7px;line-height:17px;color:#3f3f3f;letter-spacing:-0.186px;">Add</div>
<div style="position:absolute;left:343.5px;top:659.5px;width:1px;height:19px;background:#c9c9c9"></div>
<svg style="position:absolute;left:354.5px;top:659.5px" width="19" height="18" viewBox="0 0 19 18">
<path d="M0.5 0.5h11l4 4v12.5H0.5z" fill="#c6daf2" stroke="#7f9cc4" stroke-width="1"/>
<path d="M3 5h8M3 8h8M3 11h7" stroke="#8aa5cc" stroke-width="1"/>
<path d="M9 3.5l8 10M17 3.5l-7.5 10.5" stroke="#e84a25" stroke-width="2.3"/></svg>
<div class="t" style="left:379.50px;top:660.00px;font-size:13.7px;line-height:17px;color:#3f3f3f;letter-spacing:-0.495px;">Remove</div>
<div style="position:absolute;left:450.5px;top:659.5px;width:1px;height:19px;background:#c9c9c9"></div>
<svg style="position:absolute;left:463px;top:660.0px" width="15" height="15" viewBox="0 0 15 15">
<path d="M7.5 0.5L14.3 7.5H11.5v6.8H3.5V7.5H0.7z" fill="#56c24a" stroke="#2f9a2a" stroke-width="1"/></svg>
<div class="t" style="left:486.70px;top:660.00px;font-size:13.7px;line-height:17px;color:#3f3f3f;letter-spacing:0.000px;">Up</div>
<div style="position:absolute;left:527.5px;top:659.5px;width:1px;height:19px;background:#c9c9c9"></div>
<svg style="position:absolute;left:539px;top:661.5px" width="15" height="15" viewBox="0 0 15 15">
<path d="M7.5 14.5L14.3 7.5H11.5V0.7H3.5v6.8H0.7z" fill="#56c24a" stroke="#2f9a2a" stroke-width="1"/></svg>
<div class="t" style="left:563.60px;top:660.00px;font-size:13.7px;line-height:17px;color:#3f3f3f;letter-spacing:-0.200px;">Down</div>
<div style="position:absolute;left:621.5px;top:659.5px;width:1px;height:19px;background:#c9c9c9"></div>
<svg style="position:absolute;left:631px;top:659.5px" width="20" height="18" viewBox="0 0 20 18">
<path d="M1 0.5h9l3 3v13.5H1z" fill="#f3f6fb" stroke="#a9bbd6" stroke-width="1"/>
<path d="M2.5 8l3.5 4 7-10" fill="none" stroke="#3f7fd0" stroke-width="2"/>
<path d="M7 16l1-4 8-8 3 3-8 8z" fill="#f0c060" stroke="#b08040" stroke-width="0.8"/>
<path d="M15 5l3 3" stroke="#e07a7a" stroke-width="2"/></svg>
<div class="t" style="left:657.30px;top:660.00px;font-size:13.7px;line-height:17px;color:#3f3f3f;letter-spacing:-0.273px;">Edit</div>
<div style="position:absolute;left:703.5px;top:659.5px;width:1px;height:19px;background:#c9c9c9"></div>
<svg style="position:absolute;left:712.5px;top:659.0px" width="20" height="19" viewBox="0 0 20 19">
<path d="M0.5 1.5l1-1h7l1.5 2.5H17.5v13.5H0.5z" fill="#f6dc94" stroke="#e3b166" stroke-width="1"/>
<path d="M2 4h14" stroke="#f0c878" stroke-width="1"/><path d="M3 4h1M8 4h1" stroke="#e06a6a" stroke-width="1.2"/>
<rect x="5" y="6.5" width="5" height="7" fill="#f8e4b8" stroke="#e8c080" stroke-width="0.8"/>
<path d="M5 13.7h4.5" stroke="#d86a50" stroke-width="1.2"/>
<path d="M10.5 5.5h4.5l3.5 3.5v9h-8z" fill="#f4f7fc" stroke="#5c7094" stroke-width="1.3"/>
<path d="M15 5.5v3.5h3.5" fill="#9eb0cc" stroke="#5c7094" stroke-width="1"/></svg>
<div class="t" style="left:739.60px;top:660.00px;font-size:13.7px;line-height:17px;color:#3f3f3f;letter-spacing:-0.161px;">Edit Library</div>
<div style="position:absolute;left:265px;top:683px;width:562px;height:146px;border:1px solid #729dd3;box-sizing:border-box"></div>
<div style="position:absolute;left:267px;top:684.5px;width:559px;height:24.8px;background:#dddddd"></div>
<div style="position:absolute;left:267px;top:709.3px;width:559px;height:24.7px;background:#c5ddf8"></div>
<div class="t" style="left:270.00px;top:689.00px;font-size:13.7px;line-height:17px;color:#707070;letter-spacing:-0.263px;">Library</div>
<div class="t" style="left:494.00px;top:689.00px;font-size:13.7px;line-height:17px;color:#707070;letter-spacing:-0.188px;">Function</div>
<div class="t" style="left:717.80px;top:689.00px;font-size:13.7px;line-height:17px;color:#707070;letter-spacing:-0.376px;">Enabled</div>
<div class="t" style="left:270.00px;top:713.50px;font-size:13.7px;line-height:17px;color:#474747;letter-spacing:-0.324px;">msdyn_/Case/Case.Library.js</div>
<div class="t" style="left:494.00px;top:713.50px;font-size:13.7px;line-height:17px;color:#474747;letter-spacing:-0.123px;">YourFunctionName</div>
<div class="t" style="left:717.80px;top:713.50px;font-size:13.7px;line-height:17px;color:#474747;letter-spacing:-0.660px;">True</div>
<div style="position:absolute;left:679px;top:895px;width:100px;height:30px;background:#1160b8"></div>
<div class="t" style="left:717.44px;top:902.00px;font-size:16px;line-height:20px;color:#ffffff;">OK</div>
<div style="position:absolute;left:789px;top:895px;width:100px;height:30px;border:1.5px solid #1874d2;box-sizing:border-box;background:#fff"></div>
<div class="t" style="left:816.75px;top:901.00px;font-size:16px;line-height:20px;color:#1f74cc;letter-spacing:-1.052px;">Cancel</div>
</body></html>
